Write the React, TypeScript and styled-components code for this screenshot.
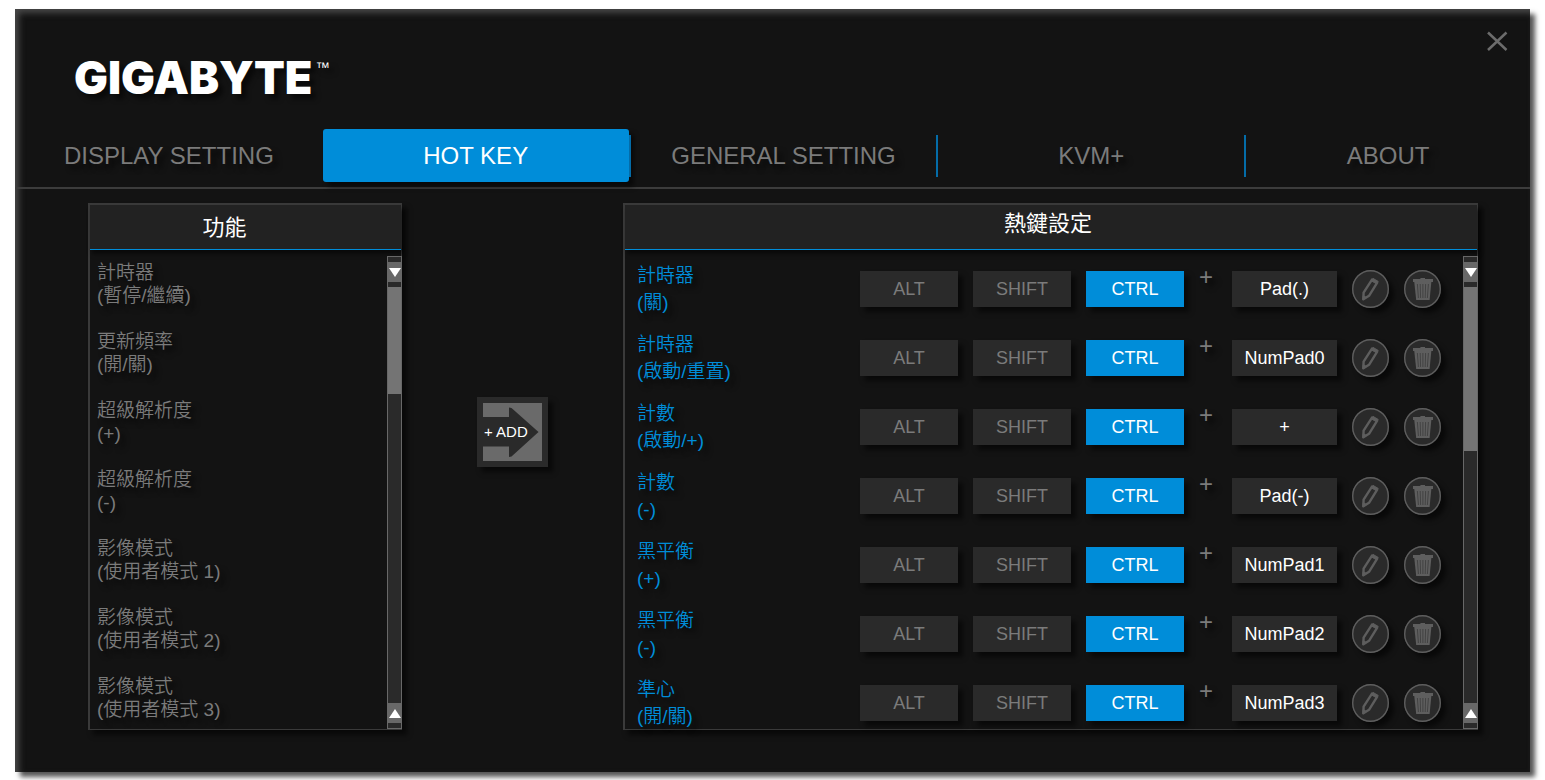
import React, { useState } from "react";
import styled, { createGlobalStyle } from "styled-components";

const GlobalStyle = createGlobalStyle`
  * { box-sizing: border-box; }
  body {
    margin: 0;
    background: #fff;
    font-family: "Liberation Sans", "Noto Sans CJK TC", sans-serif;
  }
  button { font-family: inherit; cursor: pointer; }
`;

const blue = "#008dd9";
const dropShadow = "5px 5px 5px rgba(0, 0, 0, 0.55)";

const Window = styled.main`
  margin: 9px 15px 8px;
  padding-bottom: 42px;
  background: #131313;
  box-shadow: inset 4px 4px 6px #484848, 5px 5px 5px #555;
`;

const TitleBar = styled.header`
  display: flex;
  justify-content: space-between;
  align-items: flex-start;
  height: 120px;
  padding: 22px 22px 0 59px;
`;

const Logo = styled.h1`
  display: flex;
  align-items: flex-start;
  margin: 24px 0 0;
  font-family: Inter, "Open Sans", sans-serif;
  font-size: 45px;
  line-height: 46px;
  font-weight: 900;
  color: #fff;
  text-shadow: ${dropShadow};
`;

const Trademark = styled.span`
  margin: 5px 0 0 3px;
  font-family: "Liberation Sans", sans-serif;
  font-size: 14px;
  line-height: 14px;
  font-weight: 400;
`;

const CloseButton = styled.button`
  display: flex;
  padding: 0;
  border: 0;
  background: none;
  color: #6c6c6c;
`;

const Tabs = styled.nav`
  display: grid;
  grid-template-columns: repeat(4, 308fr) 284fr;
  align-items: center;
  padding-bottom: 5px;
  border-bottom: 2px solid #3c3c3c;
`;

const TabCell = styled.div<{ $divided: boolean }>`
  display: flex;
  align-items: center;
  height: 53px;
  &::after {
    content: "";
    display: ${(p) => (p.$divided ? "block" : "none")};
    width: 2px;
    height: 42px;
    background: #046ca8;
  }
`;

const Tab = styled.button<{ $active: boolean }>`
  flex: 1;
  height: 53px;
  padding: 0;
  border: 0;
  border-radius: 3px;
  background: ${(p) => (p.$active ? blue : "transparent")};
  box-shadow: ${(p) => (p.$active ? dropShadow : "none")};
  color: ${(p) => (p.$active ? "#fff" : "#7b7b7b")};
  text-shadow: ${(p) => (p.$active ? "none" : dropShadow)};
  font-size: 24px;
  line-height: 28px;
`;

const Content = styled.div`
  display: grid;
  grid-template-columns: 314fr 221fr 855fr;
  padding: 14px 52px 0 73px;
`;

const Panel = styled.section`
  display: flex;
  flex-direction: column;
  border: 1px solid #3a3a3a;
  border-top-width: 2px;
  border-left-width: 2px;
  box-shadow: ${dropShadow};
`;

const PanelHeading = styled.h2<{ $wide?: boolean }>`
  margin: 0;
  height: 45px;
  padding: ${(p) => (p.$wide ? "0 6px 8px 0" : "0 42px 0 0")};
  border-bottom: 1px solid ${blue};
  background: #222;
  box-shadow: 2px 4px 4px rgba(0, 0, 0, 0.5);
  color: #fff;
  text-align: center;
  font-size: 22px;
  line-height: ${(p) => (p.$wide ? "38px" : "46px")};
  font-weight: 400;
`;

const PanelBody = styled.div`
  flex: 1;
  display: flex;
`;

const FunctionList = styled.ul`
  flex: 1;
  margin: 0;
  padding: 11px 0 8px 7px;
  list-style: none;
  display: flex;
  flex-direction: column;
  gap: 23px;
`;

const FunctionItem = styled.li`
  color: #7b7b7b;
  font-size: 19px;
  line-height: 23px;
  font-weight: 350;
  text-shadow: ${dropShadow};
`;

const Line = styled.span`
  display: block;
`;

const ScrollBar = styled.div`
  display: flex;
  flex-direction: column;
  flex: none;
  width: 15px;
  margin: 6px -1px 0 0;
  border: 1px solid #686868;
  background: #2a2a2a;
`;

const ScrollButton = styled.button`
  display: flex;
  align-items: center;
  justify-content: center;
  height: 30px;
  padding: 0;
  border: solid #2a2a2a;
  border-width: 5px 0;
  background: #686868;
`;

const Thumb = styled.div<{ $share: number }>`
  height: ${(p) => p.$share}%;
  background: #747474;
`;

const Track = styled.div`
  flex: 1;
  display: flex;
  flex-direction: column;
`;

const AddButton = styled.button`
  position: relative;
  justify-self: center;
  width: 71px;
  height: 70px;
  margin-top: 194px;
  padding: 0 0 0 1px;
  border: 6px solid #2a2a2a;
  background: #6a6a6a;
  box-shadow: ${dropShadow};
  color: #fff;
  font-size: 15px;
  line-height: 16px;
  text-align: left;
`;

const AddArrow = styled.svg`
  position: absolute;
  left: 0;
  top: 0;
`;

const AddLabel = styled.span`
  position: relative;
  white-space: nowrap;
`;

const HotKeyList = styled.ul`
  flex: 1;
  margin: 0;
  padding: 13px 22px 0 12px;
  list-style: none;
  display: flex;
  flex-direction: column;
  gap: 17px;
`;

const HotKeyRow = styled.li`
  display: flex;
  align-items: center;
  gap: 15px;
  height: 52px;
`;

const HotKeyName = styled.div`
  flex: 1;
  color: ${blue};
  font-size: 19px;
  line-height: 27px;
  font-weight: 350;
  text-shadow: ${dropShadow};
`;

const KeyButton = styled.button<{ $active?: boolean; $assigned?: boolean }>`
  width: ${(p) => (p.$assigned ? 105 : 98)}px;
  height: 36px;
  padding: 0;
  border: 0;
  background: ${(p) => (p.$active ? blue : "#2a2a2a")};
  box-shadow: ${dropShadow};
  color: ${(p) => (p.$active || p.$assigned ? "#fff" : "#7b7b7b")};
  font-size: 18px;
  line-height: 20px;
`;

const Plus = styled.span`
  width: 18px;
  padding: 0 4px 24px 0;
  color: #7b7b7b;
  text-align: center;
  font-size: 24px;
  line-height: 24px;
  text-shadow: ${dropShadow};
`;

const RoundButton = styled.button`
  display: flex;
  width: 37px;
  height: 38px;
  padding: 0;
  border: 0;
  border-radius: 50%;
  background: #2a2a2a;
  box-shadow: ${dropShadow};
`;

const tabs = ["DISPLAY SETTING", "HOT KEY", "GENERAL SETTING", "KVM+", "ABOUT"];

const functions: [string, string][] = [
  ["計時器", "(暫停/繼續)"],
  ["更新頻率", "(開/關)"],
  ["超級解析度", "(+)"],
  ["超級解析度", "(-)"],
  ["影像模式", "(使用者模式 1)"],
  ["影像模式", "(使用者模式 2)"],
  ["影像模式", "(使用者模式 3)"],
];

const modifiers = ["ALT", "SHIFT", "CTRL"];

const hotKeys = [
  { name: "計時器", action: "(關)", modifier: "CTRL", key: "Pad(.)" },
  { name: "計時器", action: "(啟動/重置)", modifier: "CTRL", key: "NumPad0" },
  { name: "計數", action: "(啟動/+)", modifier: "CTRL", key: "+" },
  { name: "計數", action: "(-)", modifier: "CTRL", key: "Pad(-)" },
  { name: "黑平衡", action: "(+)", modifier: "CTRL", key: "NumPad1" },
  { name: "黑平衡", action: "(-)", modifier: "CTRL", key: "NumPad2" },
  { name: "準心", action: "(開/關)", modifier: "CTRL", key: "NumPad3" },
];

function PencilIcon() {
  return (
    <svg width="37" height="38" viewBox="0 0 37 38" fill="none" stroke="#5e5e5e" aria-hidden="true">
      <ellipse cx="18.5" cy="19" rx="17.8" ry="18.3" strokeWidth="1.4" />
      <path d="M11.6 22.6 20 9.6 25.2 12.6 17 25.8 11.4 29.2Z" strokeWidth="2.4" strokeLinejoin="round" />
      <path d="M19.6 11 24.6 13.8 26.2 11.4 21 8.4Z" fill="#5e5e5e" strokeWidth="1" strokeLinejoin="round" />
      <path d="M11 25.6 14.6 27.6 10.8 30Z" fill="#5e5e5e" strokeWidth="1" />
    </svg>
  );
}

function TrashIcon() {
  return (
    <svg width="37" height="38" viewBox="0 0 37 38" aria-hidden="true">
      <ellipse cx="18.5" cy="19" rx="17.8" ry="18.3" fill="none" stroke="#5e5e5e" strokeWidth="1.4" />
      <path d="M16.4 9V8h4.6v1h8v3H9V9Z" fill="#5e5e5e" />
      <path d="M10.2 11.6h17.2L25.6 30H12.2Z" fill="#5e5e5e" />
      <path
        d="M13.4 14 14.4 28M16.2 14 16.6 28M18.9 14V28M21.6 14 21.2 28M24.4 14 23.4 28"
        fill="none"
        stroke="#404040"
        strokeWidth="0.9"
      />
    </svg>
  );
}

function Scroller({ share, label }: { share: number; label: string }) {
  return (
    <ScrollBar>
      <ScrollButton aria-label={`${label} ▼`}>
        <svg width="12" height="9" viewBox="0 0 12 9" aria-hidden="true">
          <path d="M0 0h12L6 9Z" fill="#fff" />
        </svg>
      </ScrollButton>
      <Track>
        <Thumb $share={share} />
      </Track>
      <ScrollButton aria-label={`${label} ▲`}>
        <svg width="12" height="9" viewBox="0 0 12 9" aria-hidden="true">
          <path d="M0 9h12L6 0Z" fill="#fff" />
        </svg>
      </ScrollButton>
    </ScrollBar>
  );
}

export default function App() {
  const [activeTab, setActiveTab] = useState("HOT KEY");

  return (
    <>
      <GlobalStyle />
      <Window>
        <TitleBar>
          <Logo>
            GIGABYTE<Trademark>™</Trademark>
          </Logo>
          <CloseButton aria-label="Close">
            <svg width="21" height="21" viewBox="0 0 21 21" fill="none" stroke="currentColor" strokeWidth="2.5" aria-hidden="true">
              <path d="M1 1.5 19.5 19M19.5 1.5 1 19" />
            </svg>
          </CloseButton>
        </TitleBar>
        <Tabs>
          {tabs.map((tab, i) => (
            <TabCell key={tab} $divided={i > 0 && i < tabs.length - 1}>
              <Tab $active={tab === activeTab} onClick={() => setActiveTab(tab)}>
                {tab}
              </Tab>
            </TabCell>
          ))}
        </Tabs>
        <Content>
          <Panel>
            <PanelHeading>功能</PanelHeading>
            <PanelBody>
              <FunctionList>
                {functions.map(([name, action]) => (
                  <FunctionItem key={name + action}>
                    <Line>{name}</Line>
                    <Line>{action}</Line>
                  </FunctionItem>
                ))}
              </FunctionList>
              <Scroller share={26} label="功能" />
            </PanelBody>
          </Panel>
          <AddButton>
            <AddArrow width="59" height="58" viewBox="0 0 59 58" aria-hidden="true">
              <path d="M0 14H26V4.5L28.5 5 55.5 29 28.5 53.5 26 54V43.5H0Z" fill="#2a2a2a" />
            </AddArrow>
            <AddLabel>+ ADD</AddLabel>
          </AddButton>
          <Panel>
            <PanelHeading $wide>熱鍵設定</PanelHeading>
            <PanelBody>
              <HotKeyList>
                {hotKeys.map((hotKey) => (
                  <HotKeyRow key={hotKey.key}>
                    <HotKeyName>
                      <Line>{hotKey.name}</Line>
                      <Line>{hotKey.action}</Line>
                    </HotKeyName>
                    {modifiers.map((modifier) => (
                      <KeyButton key={modifier} $active={modifier === hotKey.modifier}>
                        {modifier}
                      </KeyButton>
                    ))}
                    <Plus>+</Plus>
                    <KeyButton $assigned>{hotKey.key}</KeyButton>
                    <RoundButton aria-label="Edit">
                      <PencilIcon />
                    </RoundButton>
                    <RoundButton aria-label="Delete">
                      <TrashIcon />
                    </RoundButton>
                  </HotKeyRow>
                ))}
              </HotKeyList>
              <Scroller share={40} label="熱鍵設定" />
            </PanelBody>
          </Panel>
        </Content>
      </Window>
    </>
  );
}
